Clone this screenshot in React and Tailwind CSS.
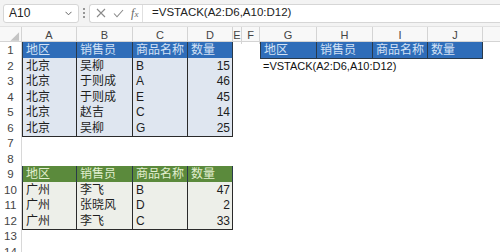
import React from "react";

const GRID = "grid grid-cols-[22px_55px_56px_55px_45px_9px_18px_57px_56px_55px_55px_1fr]";
const LETTERS = ["", "A", "B", "C", "D", "E", "F", "G", "H", "I", "J", ""];
const HEAD = ["地区", "销售员", "商品名称", "数量"];

const blueData = [
  ["北京", "吴柳", "B", "15"],
  ["北京", "于则成", "A", "46"],
  ["北京", "于则成", "E", "45"],
  ["北京", "赵吉", "C", "14"],
  ["北京", "吴柳", "G", "25"],
];
const greenData = [
  ["广州", "李飞", "B", "47"],
  ["广州", "张晓风", "D", "2"],
  ["广州", "李飞", "C", "33"],
];

const font = { fontFamily: '"Liberation Sans", "Noto Sans CJK SC", sans-serif' };

function HeaderCell({ text, color, textColor, first, top }) {
  return (
    <div
      className={`flex items-center pl-[3px] text-[12px] border-r border-b border-[#2a3a4a] overflow-hidden whitespace-nowrap ${first ? "border-l" : ""} ${top ? "border-t" : ""} ${color} ${textColor}`}
    >
      {text}
    </div>
  );
}

function DataCell({ text, bg, first, right, last }) {
  return (
    <div
      className={`flex items-center text-[12px] text-[#1e1e1e] border-r border-b ${last ? "border-b-[#2a2a2a]" : "border-b-[#5a5f66]"} border-r-[#2a2a2a] overflow-hidden whitespace-nowrap ${first ? "border-l border-l-[#2a2a2a]" : ""} ${right ? "justify-end pr-[2px]" : "pl-[3px]"} ${bg}`}
    >
      {text}
    </div>
  );
}

function RowNum({ n }) {
  return (
    <div className="flex items-center justify-center text-[11.5px] text-[#444] border-r border-[#d8d8d8] bg-white">
      {n}
    </div>
  );
}

function Row({ n, children }) {
  return (
    <div className={`${GRID} h-[15.5px]`}>
      <RowNum n={n} />
      {children}
    </div>
  );
}

function Empty({ count }) {
  return Array.from({ length: count }).map((_, i) => <div key={i} />);
}

export default function App() {
  return (
    <div className="w-[500px] h-[252px] overflow-hidden bg-white" style={font}>
      {/* formula bar */}
      <div className="h-[27px] bg-[#f3f3f3] flex items-center pl-[3px] border-b border-[#e2e2e2]">
        <div className="w-[76px] h-[19px] bg-white border border-[#d6d6d6] rounded-[3px] flex items-center justify-between pl-[5px] pr-[6px]">
          <span className="text-[12px] text-[#222]">A10</span>
          <svg width="7" height="5" viewBox="0 0 7 5">
            <path d="M0.5 0.8 L3.5 3.8 L6.5 0.8" fill="none" stroke="#666" strokeWidth="1" />
          </svg>
        </div>
        <div className="w-[10px] flex flex-col items-center gap-[2px]">
          <span className="w-[2px] h-[2px] bg-[#777] rounded-full" />
          <span className="w-[2px] h-[2px] bg-[#777] rounded-full" />
          <span className="w-[2px] h-[2px] bg-[#777] rounded-full" />
        </div>
        <div className="flex-1 h-[19px] bg-white border border-[#d6d6d6] border-r-0 rounded-l-[3px] flex items-center">
          <div className="w-[53px] h-full flex items-center justify-around pl-[2px] border-r border-[#e0e0e0]">
            <svg width="10" height="10" viewBox="0 0 10 10">
              <path d="M1 1 L9 9 M9 1 L1 9" stroke="#8a8a8a" strokeWidth="1.1" />
            </svg>
            <svg width="11" height="9" viewBox="0 0 11 9">
              <path d="M1 4.5 L4 7.8 L10 1" fill="none" stroke="#8a8a8a" strokeWidth="1.1" />
            </svg>
            <span className="text-[12px] italic text-[#666]" style={{ fontFamily: '"Liberation Serif", serif' }}>
              f<span className="text-[9px]">x</span>
            </span>
          </div>
          <span className="pl-[9px] text-[11.5px] text-[#222] whitespace-nowrap">=VSTACK(A2:D6,A10:D12)</span>
        </div>
      </div>

      {/* column headers */}
      <div className={`${GRID} h-[15px] bg-[#f8f8f8] border-b border-[#d4d4d4]`}>
        {LETTERS.map((l, i) => (
          <div
            key={i}
            className={`flex items-center justify-center text-[11px] text-[#444] ${i < 11 ? "border-r border-[#d4d4d4]" : ""}`}
          >
            {i === 0 ? (
              <svg width="22" height="15" viewBox="0 0 22 15">
                <path d="M20 4 L20 13 L11 13 Z" fill="#c4c4c4" />
              </svg>
            ) : (
              l
            )}
          </div>
        ))}
      </div>

      {/* row 1 */}
      <Row n={1}>
        {HEAD.map((h, i) => (
          <HeaderCell key={i} text={h} color="bg-[#2f6db9]" textColor="text-[#d3e2f6]" first={i === 0} />
        ))}
        <Empty count={2} />
        {HEAD.map((h, i) => (
          <HeaderCell key={"r" + i} text={h} color="bg-[#2f6db9]" textColor="text-[#d3e2f6]" first={i === 0} />
        ))}
        <div />
      </Row>

      {blueData.map((r, ri) => (
        <Row key={ri} n={ri + 2}>
          {r.map((c, ci) => (
            <DataCell
              key={ci}
              text={c}
              bg="bg-[#dfe6f0]"
              first={ci === 0}
              right={ci === 3}
              last={ri === blueData.length - 1}
            />
          ))}
          <Empty count={2} />
          {ri === 0 ? (
            <div className="relative">
              <span className="absolute left-[3px] top-0 h-full flex items-center text-[11px] text-[#111] whitespace-nowrap">
                =VSTACK(A2:D6,A10:D12)
              </span>
            </div>
          ) : (
            <div />
          )}
          <Empty count={4} />
        </Row>
      ))}

      <Row n={7}><Empty count={11} /></Row>
      <Row n={8}><Empty count={11} /></Row>

      <Row n={9}>
        {HEAD.map((h, i) => (
          <HeaderCell key={i} text={h} color="bg-[#5b8a3c]" textColor="text-[#e2efcf]" first={i === 0} />
        ))}
        <Empty count={7} />
      </Row>

      {greenData.map((r, ri) => (
        <Row key={ri} n={ri + 10}>
          {r.map((c, ci) => (
            <DataCell
              key={ci}
              text={c}
              bg="bg-[#edefe9]"
              first={ci === 0}
              right={ci === 3}
              last={ri === greenData.length - 1}
            />
          ))}
          <Empty count={7} />
        </Row>
      ))}

      <Row n={13}><Empty count={11} /></Row>
      <Row n={14}><Empty count={11} /></Row>
    </div>
  );
}
